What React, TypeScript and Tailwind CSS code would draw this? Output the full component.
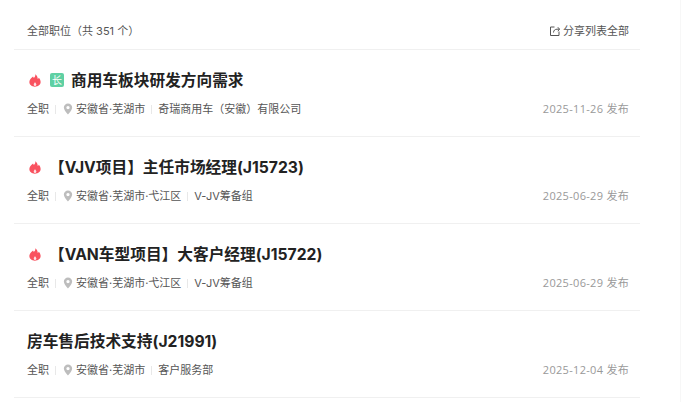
import type { ReactNode } from 'react'

type Job = {
  title: string
  location: string
  dept: string
  date: string
  hot?: boolean
  urgent?: boolean
}

const jobs: Job[] = [
  { title: '商用车板块研发方向需求', location: '安徽省·芜湖市', dept: '奇瑞商用车（安徽）有限公司', date: '2025-11-26 发布', hot: true, urgent: true },
  { title: '【VJV项目】主任市场经理(J15723)', location: '安徽省·芜湖市·弋江区', dept: 'V-JV筹备组', date: '2025-06-29 发布', hot: true },
  { title: '【VAN车型项目】大客户经理(J15722)', location: '安徽省·芜湖市·弋江区', dept: 'V-JV筹备组', date: '2025-06-29 发布', hot: true },
  { title: '房车售后技术支持(J21991)', location: '安徽省·芜湖市', dept: '客户服务部', date: '2025-12-04 发布' },
]

function FlameIcon() {
  return (
    <svg width="12" height="13" viewBox="0 0 13 14" className="shrink-0">
      <path
        d="M6.800 0.300c.4 2-.6 3-1.500 4C4.900 3.700 4.600 3.200 4.400 2.700 2.200 4.300.4 6.300.4 8.700c0 3 2.700 5 6 5s6.200-2 6.200-5c0-2-1-3.600-2-4.700-.2.700-.6 1.200-1.100 1.500C9.500 3.600 8.700 1.500 6.800.3z"
        fill="#f9525f"
      />
      <path d="M6.500 8.800c-.7 1-1.400 1.500-1.400 2.600 0 1 .7 1.600 1.400 1.600s1.500-.6 1.500-1.600c0-1.100-.8-1.600-1.500-2.600z" fill="#fde3e5" />
    </svg>
  )
}

function PinIcon() {
  return (
    <svg width="10" height="12" viewBox="0 0 10 13" className="shrink-0">
      <path
        fillRule="evenodd"
        d="M5 .5a4.500 4.500 0 0 0-4.500 4.500C.5 8 5 12.500 5 12.500S9.500 8 9.500 5A4.500 4.500 0 0 0 5 .5zm0 2.700a1.800 1.800 0 1 1 0 3.600 1.800 1.800 0 0 1 0-3.600z"
        fill="#bdbdbd"
      />
    </svg>
  )
}

function ShareIcon() {
  return (
    <svg width="10" height="10" viewBox="0 0 10 10" fill="none" stroke="#555" strokeWidth="1" className="shrink-0">
      <path d="M4.500 1H.5v8.500H9V5.500" />
      <path d="M3.500 6.500C3.500 4.500 5 3.200 7 3.200h2.500M7.800 1.200l1.800 2-1.800 2" />
    </svg>
  )
}

function Divider() {
  return <span className="mx-[6px] h-[9px] w-px bg-[#e8e8e8]" />
}

function Meta({ children }: { children: ReactNode }) {
  return <span className="whitespace-nowrap">{children}</span>
}

function JobRow({ job }: { job: Job }) {
  return (
    <div className="h-[87px] border-b border-[#f0f0f0] pl-[13px] pr-[11px] pt-[18px]">
      <div className="flex h-[24px] items-center">
        {job.hot && (
          <div className="ml-[2px] mr-[8px]">
            <FlameIcon />
          </div>
        )}
        {job.urgent && (
          <span className="mr-[7px] ml-[1px] flex h-[14px] w-[14px] items-center justify-center rounded-[2px] bg-[#5fd0a3] text-[10px] leading-none text-white">
            长
          </span>
        )}
        <h3 className="mt-[1px] whitespace-nowrap text-[15.7px] font-bold leading-[24px] text-[#222222] [text-spacing-trim:space-all]">
          {job.title}
        </h3>
      </div>
      <div className="mt-[7px] flex h-[20px] items-center justify-between text-[11px] text-[#555555]">
        <div className="flex items-center">
          <Meta>全职</Meta>
          <Divider />
          <div className="mr-[3px] ml-[1px]">
            <PinIcon />
          </div>
          <Meta>{job.location}</Meta>
          <Divider />
          <Meta>{job.dept}</Meta>
        </div>
        <span className="whitespace-nowrap font-['Open_Sans','Noto_Sans_CJK_SC',sans-serif] tracking-[0.3px] text-[#999999]">
          {job.date}
        </span>
      </div>
    </div>
  )
}

export default function App() {
  return (
    <div
      className="h-[402px] w-[692px] overflow-hidden bg-white"
      style={{ fontFamily: 'Inter, "Noto Sans CJK SC", sans-serif' }}
    >
      <div className="h-full w-[681px] border-r border-[#f7f7f7] pl-[14px]">
        <div className="w-[626px]">
          <div className="flex h-[50px] items-center justify-between border-b border-[#f0f0f0] pl-[13px] pr-[11px] pt-[13px] text-[11px] text-[#555555]">
            <span className="[text-spacing-trim:space-all]">全部职位（共 351 个）</span>
            <span className="flex items-center gap-[3px]">
              <ShareIcon />
              分享列表全部
            </span>
          </div>
          {jobs.map((job) => (
            <JobRow key={job.title} job={job} />
          ))}
        </div>
      </div>
    </div>
  )
}
